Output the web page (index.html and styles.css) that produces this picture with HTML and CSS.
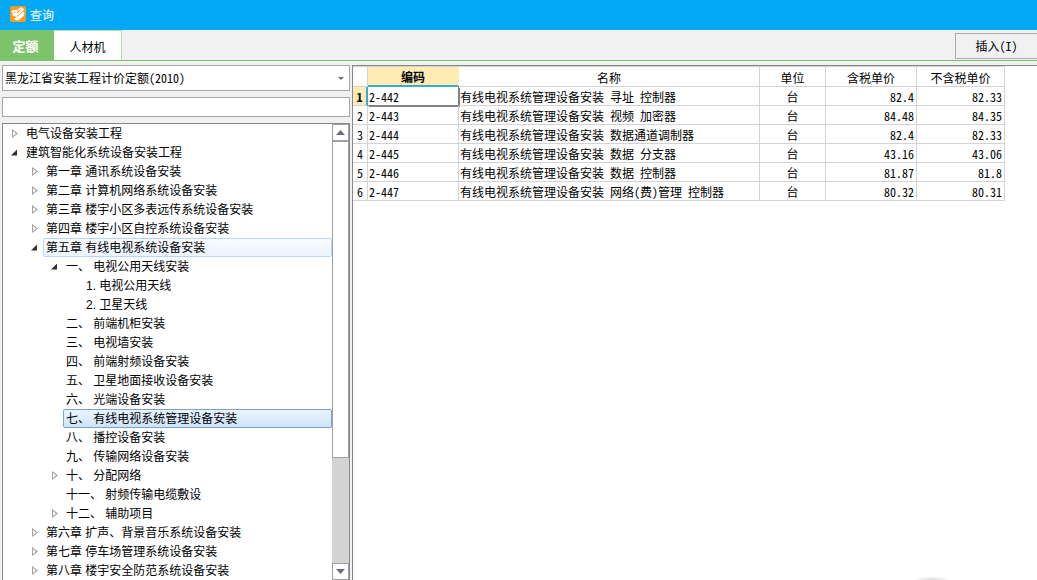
FILE: index.html
```html
<!DOCTYPE html>
<html lang="zh-CN">
<head>
<meta charset="utf-8">
<title>查询</title>
<link rel="stylesheet" href="styles.css">
</head>
<body>
<header class="titlebar">
  <svg class="logo" viewBox="0 0 16 16" aria-hidden="true">
    <rect width="16" height="16" rx="2" fill="#f99d1f"/>
    <path d="M2.500 5 5.500 4 8 5.500 5.500 8 7 9.500 13.500 6 13.500 9 9.500 13.500 5 14 4.500 12.500 6.500 11 3 9.500 2.500 8z" fill="#fff" fill-opacity=".85"/>
    <path d="M2.500 5.500 7 4.800 3.500 8.800 8 8 13 3.500M9 3.300l2.500-1M5.500 13l8-6M7.500 13.500 13.200 9" fill="none" stroke="#fff" stroke-width="1.900" stroke-linecap="round" stroke-linejoin="round"/>
    <path d="M3.500 7 5.500 6.300M7.500 10.300 11 7.200" fill="none" stroke="#f99d1f" stroke-width=".8"/>
  </svg>
  <h1 class="title">查询</h1>
</header>
<nav class="tabbar">
  <button class="tab tab-active" type="button">定额</button>
  <button class="tab" type="button">人材机</button>
  <button class="insert" type="button">插入(I)</button>
</nav>
<main class="workspace">
  <section class="sidebar">
    <div class="library">
      <select class="library-select" aria-label="定额库"><option>黑龙江省安装工程计价定额(2010)</option></select>
      <svg class="library-arrow" viewBox="0 0 6 3" aria-hidden="true"><path d="M0 0h6L3 3z" fill="#6a6d7c"/></svg>
    </div>
    <input class="search" type="text" aria-label="搜索">
    <div class="tree-box">
      <ul class="tree">
        <li><div class="row"><button class="toggle closed" type="button" aria-label="展开"></button><span class="label">电气设备安装工程</span></div></li>
        <li><div class="row"><button class="toggle open" type="button" aria-label="收起"></button><span class="label">建筑智能化系统设备安装工程</span></div>
          <ul>
            <li><div class="row"><button class="toggle closed" type="button" aria-label="展开"></button><span class="label">第一章 通讯系统设备安装</span></div></li>
            <li><div class="row"><button class="toggle closed" type="button" aria-label="展开"></button><span class="label">第二章 计算机网络系统设备安装</span></div></li>
            <li><div class="row"><button class="toggle closed" type="button" aria-label="展开"></button><span class="label">第三章 楼宇小区多表远传系统设备安装</span></div></li>
            <li><div class="row"><button class="toggle closed" type="button" aria-label="展开"></button><span class="label">第四章 楼宇小区自控系统设备安装</span></div></li>
            <li><div class="row"><button class="toggle open" type="button" aria-label="收起"></button><span class="label hovered">第五章 有线电视系统设备安装</span></div>
              <ul>
                <li><div class="row"><button class="toggle open" type="button" aria-label="收起"></button><span class="label">一、 电视公用天线安装</span></div>
                  <ul>
                    <li><div class="row leaf"><span class="label">1. 电视公用天线</span></div></li>
                    <li><div class="row leaf"><span class="label">2. 卫星天线</span></div></li>
                  </ul>
                </li>
                <li><div class="row leaf"><span class="label">二、 前端机柜安装</span></div></li>
                <li><div class="row leaf"><span class="label">三、 电视墙安装</span></div></li>
                <li><div class="row leaf"><span class="label">四、 前端射频设备安装</span></div></li>
                <li><div class="row leaf"><span class="label">五、 卫星地面接收设备安装</span></div></li>
                <li><div class="row leaf"><span class="label">六、 光端设备安装</span></div></li>
                <li><div class="row leaf"><span class="label selected">七、 有线电视系统管理设备安装</span></div></li>
                <li><div class="row leaf"><span class="label">八、 播控设备安装</span></div></li>
                <li><div class="row leaf"><span class="label">九、 传输网络设备安装</span></div></li>
                <li><div class="row"><button class="toggle closed" type="button" aria-label="展开"></button><span class="label">十、 分配网络</span></div></li>
                <li><div class="row leaf"><span class="label">十一、 射频传输电缆敷设</span></div></li>
                <li><div class="row"><button class="toggle closed" type="button" aria-label="展开"></button><span class="label">十二、 辅助项目</span></div></li>
              </ul>
            </li>
            <li><div class="row"><button class="toggle closed" type="button" aria-label="展开"></button><span class="label">第六章 扩声、背景音乐系统设备安装</span></div></li>
            <li><div class="row"><button class="toggle closed" type="button" aria-label="展开"></button><span class="label">第七章 停车场管理系统设备安装</span></div></li>
            <li><div class="row"><button class="toggle closed" type="button" aria-label="展开"></button><span class="label">第八章 楼宇安全防范系统设备安装</span></div></li>
          </ul>
        </li>
      </ul>
      <div class="scrollbar">
        <button class="scroll-button" type="button" aria-label="向上滚动"><svg class="scroll-icon" viewBox="0 0 9 5"><path d="M0 5h9L4.500 0z" fill="#6a6d7c"/></svg></button>
        <div class="track"><div class="thumb"></div></div>
        <button class="scroll-button" type="button" aria-label="向下滚动"><svg class="scroll-icon" viewBox="0 0 9 5"><path d="M0 0h9L4.500 5z" fill="#6a6d7c"/></svg></button>
      </div>
    </div>
  </section>
  <section class="grid-box">
    <table class="grid">
      <colgroup><col class="c-index"><col class="c-price"><col class="c-name"><col class="c-unit"><col class="c-price"><col class="c-net"></colgroup>
      <thead>
        <tr><th></th><th class="current-col">编码</th><th>名称</th><th>单位</th><th>含税单价</th><th>不含税单价</th></tr>
      </thead>
      <tbody>
        <tr><th class="current-row">1</th><td class="current-cell">2-442</td><td>有线电视系统管理设备安装 寻址 控制器</td><td class="unit">台</td><td class="num">82.4</td><td class="num">82.33</td></tr>
        <tr><th>2</th><td>2-443</td><td>有线电视系统管理设备安装 视频 加密器</td><td class="unit">台</td><td class="num">84.48</td><td class="num">84.35</td></tr>
        <tr><th>3</th><td>2-444</td><td>有线电视系统管理设备安装 数据通道调制器</td><td class="unit">台</td><td class="num">82.4</td><td class="num">82.33</td></tr>
        <tr><th>4</th><td>2-445</td><td>有线电视系统管理设备安装 数据 分支器</td><td class="unit">台</td><td class="num">43.16</td><td class="num">43.06</td></tr>
        <tr><th>5</th><td>2-446</td><td>有线电视系统管理设备安装 数据 控制器</td><td class="unit">台</td><td class="num">81.87</td><td class="num">81.8</td></tr>
        <tr><th>6</th><td>2-447</td><td>有线电视系统管理设备安装 网络(费)管理 控制器</td><td class="unit">台</td><td class="num">80.32</td><td class="num">80.31</td></tr>
      </tbody>
    </table>
    <div class="floor-shadow"></div>
  </section>
</main>
</body>
</html>
```

FILE: styles.css
```css
* { box-sizing: border-box; }

body {
  margin: 0;
  height: 100vh;
  display: flex;
  flex-direction: column;
  overflow: hidden;
  background: #f1f1f1;
  color: #000;
  font-family: "Noto Sans Mono CJK SC", "Noto Sans CJK SC", sans-serif;
  font-size: 12px;
  line-height: 18px;
}

button, select, input {
  margin: 0;
  padding: 0;
  border: 0;
  border-radius: 0;
  background: none;
  color: inherit;
  font: inherit;
}

ul { margin: 0; padding: 0; list-style: none; }

.titlebar {
  flex: none;
  height: 30px;
  padding: 0 10px;
  display: flex;
  align-items: center;
  gap: 4px;
  background: #03a9f4;
  color: #fff;
}
.logo { width: 16px; height: 16px; margin-bottom: 2px; }
.title { margin: 0; font-size: 12px; font-weight: 400; }

.tabbar {
  flex: none;
  height: 31px;
  display: flex;
  border-bottom: 1px solid #7dc36b;
}
.tab {
  width: 68px;
  padding-top: 3px;
  background: #fff;
  border: 1px solid #b5dfa4;
  border-width: 1px 1px 0 0;
}
.tab-active {
  width: 54px;
  padding: 2px 3px 0 0;
  border: 0;
  background: #7dc36b;
  color: #fff;
  font-size: 13px;
  font-weight: 700;
}
.insert {
  width: 82px;
  height: 26px;
  margin: 3px 0 0 auto;
  border: 1px solid #adadad;
  border-right: 0;
}

.workspace { flex: 1; min-height: 0; display: flex; gap: 2px; padding: 4px 0 0 2px; }

.sidebar { flex: 0 0 348px; display: flex; flex-direction: column; gap: 6px; min-height: 0; }
.library { flex: none; position: relative; height: 26px; }
.library-select {
  width: 100%;
  height: 100%;
  padding-left: 2px;
  appearance: none;
  border: 1px solid #a9a9a9;
  background: #fff;
}
.library-arrow { position: absolute; right: 6px; top: 12px; width: 6px; height: 3px; }
.search { flex: none; height: 20px; padding: 0 3px; border: 1px solid #a9a9a9; background: #fff; }

.tree-box {
  flex: 1;
  min-height: 0;
  display: flex;
  border: 1px solid #828790;
  border-bottom: 0;
  background: #fff;
}
.tree {
  flex: 1;
  overflow: hidden;
  font-family: "Liberation Sans", "Noto Sans CJK SC", sans-serif;
}
.tree ul { padding-left: 20px; }
.row { height: 19px; display: flex; align-items: stretch; }
.leaf { padding-left: 20px; }
.toggle { width: 20px; flex: none; display: flex; align-items: center; padding-left: 9px; }
.toggle::before { content: ""; background: #a0a0a0; width: 6px; height: 9px; clip-path: polygon(0 0, 100% 50%, 0 100%, 0 0, 1px 2px, 1px 7px, 4px 50%, 1px 2px); }
.toggle.open { padding-left: 8px; }
.open::before { width: 6px; height: 6px; background: #303030; clip-path: polygon(100% 0, 100% 100%, 0 100%); }
.label { flex: 1; padding-left: 2px; border: 1px solid transparent; border-radius: 2px; line-height: 18px; white-space: nowrap; }
.hovered { border-color: #b8d6fb; background: linear-gradient(#fafbfd, #ebf3fd); }
.selected { border-color: #7da2ce; background: linear-gradient(#ebf4fd, #cfe3fc); }

.scrollbar { flex: 0 0 17px; display: flex; flex-direction: column; background: #d3d3d3; }
.scroll-button {
  flex: none;
  height: 17px;
  display: flex;
  align-items: center;
  justify-content: center;
  border: 1px solid #a0a0a0;
  background: #fff;
}
.scroll-icon { width: 9px; height: 5px; }
.track { flex: 1; }
.thumb { height: 75%; border: 1px solid #a0a0a0; background: #fff; }

.grid-box {
  flex: 1;
  min-width: 0;
  position: relative;
  border: 1px solid #828790;
  border-width: 1px 0 0 1px;
  background: #fff;
}
.grid { width: 652px; table-layout: fixed; border-spacing: 0; border-top: 1px solid #d3d3d3; }
.c-index { width: 15px; }
.c-price { width: 91px; }
.c-name { width: 301px; }
.c-unit { width: 66px; }
.c-net { width: 88px; }
.grid th, .grid td {
  height: 19px;
  padding: 1px 1px 0;
  border: 1px solid #d3d3d3;
  border-width: 0 1px 1px 0;
  font-weight: 400;
  line-height: 17px;
  text-align: left;
  white-space: nowrap;
}
.grid th { text-align: center; padding: 1px 0 0; }
.grid thead th { height: 20px; }
.grid .num { text-align: right; padding-right: 2px; }
.grid .unit { text-align: center; }
.grid .current-col {
  background: #ffecb3;
  border-right-color: #ffecb3;
  border-bottom: 2px solid #39a9d6;
  font-weight: 700;
}
.grid .current-row {
  background: #ffecb3;
  border-right: 2px solid #39a9d6;
  font-weight: 700;
}
.grid .current-cell { border-color: #808080; box-shadow: 1px 1px #808080; }

.floor-shadow {
  position: absolute;
  right: 86px;
  bottom: 0;
  width: 38px;
  height: 4px;
  background: radial-gradient(ellipse at bottom, #d8d8d8, #fff 70%);
}
```
